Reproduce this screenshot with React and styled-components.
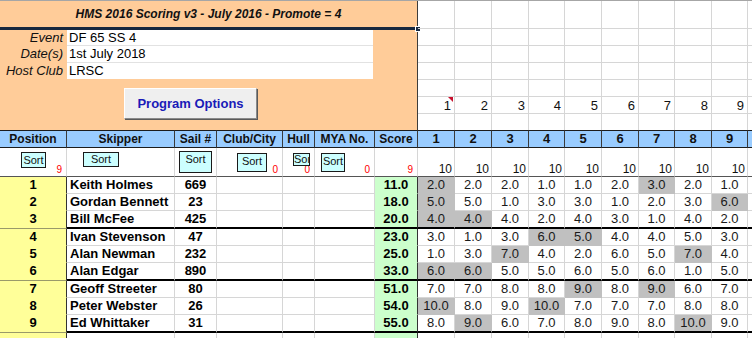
import React from 'react';
import styled, { createGlobalStyle, css } from 'styled-components';

const INFO_COLS = [67, 108, 42, 66, 32, 60, 43];
const RACE_COLS = [37, 37, 37, 36, 37, 37, 36, 37, 36, 37];
const px = (a) => a.map((w) => `${w}px`).join(' ');

const RESULTS = [
  { pos: 1, name: 'Keith Holmes', sail: '669', score: '11.0', races: ['2.0', '2.0', '2.0', '1.0', '1.0', '2.0', '3.0', '2.0', '1.0'], drop: [0, 6] },
  { pos: 2, name: 'Gordan Bennett', sail: '23', score: '18.0', races: ['5.0', '5.0', '1.0', '3.0', '3.0', '1.0', '2.0', '3.0', '6.0'], drop: [0, 8] },
  { pos: 3, name: 'Bill McFee', sail: '425', score: '20.0', races: ['4.0', '4.0', '4.0', '2.0', '4.0', '3.0', '1.0', '4.0', '2.0'], drop: [0, 1] },
  { pos: 4, name: 'Ivan Stevenson', sail: '47', score: '23.0', races: ['3.0', '1.0', '3.0', '6.0', '5.0', '4.0', '4.0', '5.0', '3.0'], drop: [3, 4] },
  { pos: 5, name: 'Alan Newman', sail: '232', score: '25.0', races: ['1.0', '3.0', '7.0', '4.0', '2.0', '6.0', '5.0', '7.0', '4.0'], drop: [2, 7] },
  { pos: 6, name: 'Alan Edgar', sail: '890', score: '33.0', races: ['6.0', '6.0', '5.0', '5.0', '6.0', '5.0', '6.0', '1.0', '5.0'], drop: [0, 1] },
  { pos: 7, name: 'Geoff Streeter', sail: '80', score: '51.0', races: ['7.0', '7.0', '8.0', '8.0', '9.0', '8.0', '9.0', '6.0', '7.0'], drop: [4, 6] },
  { pos: 8, name: 'Peter Webster', sail: '26', score: '54.0', races: ['10.0', '8.0', '9.0', '10.0', '7.0', '7.0', '7.0', '8.0', '8.0'], drop: [0, 3] },
  { pos: 9, name: 'Ed Whittaker', sail: '31', score: '55.0', races: ['8.0', '9.0', '6.0', '7.0', '8.0', '9.0', '8.0', '10.0', '9.0'], drop: [1, 7] },
];

const HEADERS = ['Position', 'Skipper', 'Sail #', 'Club/City', 'Hull', 'MYA No.', 'Score'];

const SORTS = [
  { btn: { ml: 21, mt: 4, w: 25, h: 16, label: 'Sort' }, count: '9' },
  { btn: { ml: 16, mt: 4, w: 36, h: 15, label: 'Sort' } },
  { btn: { ml: 4, mt: 3, w: 33, h: 22, label: 'Sort' } },
  { btn: { ml: 20, mt: 5, w: 30, h: 19, label: 'Sort' }, count: '0' },
  { btn: { ml: 10, mt: 5, w: 17, h: 13, label: 'Sor' }, count: '0' },
  { btn: { ml: 6, mt: 5, w: 24, h: 19, label: 'Sort' }, count: '0' },
  { count: '9' },
];

const GlobalStyle = createGlobalStyle`
  html, body { margin: 0; padding: 0; background: #ffffff; overflow: hidden; }
  body { font-family: "Liberation Sans", Arial, Helvetica, sans-serif; font-size: 13px; color: #000; }
  *, *::before, *::after { box-sizing: border-box; }
`;

const Sheet = styled.div`
  width: 752px;
  height: 338px;
  overflow: hidden;
  border-top: 1px solid #a6a6a6;
`;

const Top = styled.div`
  display: flex;
  height: 129px;
`;

const InfoPanel = styled.div`
  flex: 0 0 418px;
  background: #ffcc99;
  border-right: 1px solid #3c3c3c;
  display: flex;
  flex-direction: column;
`;

const TitleBar = styled.div`
  position: relative;
  height: 29px;
  border-bottom: 3px solid #17283f;
  text-align: center;
  font-size: 12px;
  font-weight: bold;
  font-style: italic;
  line-height: 27px;
  color: #111;
`;

const Handle = styled.span`
  position: absolute;
  right: -4px;
  bottom: -5px;
  width: 6px;
  height: 6px;
  background: #17283f;
  border: 1px solid #ffffff;
`;

const Fields = styled.div`
  display: grid;
  grid-template-columns: 67px 306px;
  grid-template-rows: 16px 17px 16px;
`;

const Label = styled.div`
  font-style: italic;
  text-align: right;
  padding-right: 4px;
  line-height: 16px;
  color: #111;
`;

const Value = styled.div`
  background: #ffffff;
  padding-left: 2px;
  line-height: 16px;
  border-bottom: ${(p) => (p.$last ? 'none' : '1px solid #e2e2e2')};
  color: #000;
`;

const ButtonRow = styled.div`
  display: flex;
  padding: 9px 0 0 124px;
`;

const ProgramButton = styled.button`
  width: 133px;
  height: 31px;
  margin: 0;
  padding: 0;
  background: #efefef;
  border: 1px solid;
  border-color: #ffffff #8a8a8a #8a8a8a #ffffff;
  box-shadow: 1px 1px 0 #5a5a5a;
  font-family: inherit;
  font-size: 13px;
  font-weight: bold;
  color: #1a1ab8;
  cursor: default;
`;

const MiniGrid = styled.div`
  flex: 0 0 auto;
  display: grid;
  grid-template-columns: ${px(RACE_COLS)};
  grid-template-rows: 28px 17px 17px 17px 17px 17px 16px;
`;

const GridCell = styled.div`
  position: relative;
  border-right: 1px solid #d6d6d6;
  border-bottom: ${(p) => (p.$open ? 'none' : '1px solid #d6d6d6')};
  text-align: right;
  padding-right: 3px;
  line-height: 17px;
  font-size: 13px;
  color: #111;
  ${(p) =>
    p.$comment &&
    css`
      &::after {
        content: '';
        position: absolute;
        top: 0;
        right: 1px;
        border-top: 5px solid #c8102e;
        border-left: 5px solid transparent;
      }
    `}
`;

const Table = styled.div`
  display: grid;
  grid-template-columns: ${px([...INFO_COLS, ...RACE_COLS])};
  width: ${[...INFO_COLS, ...RACE_COLS].reduce((a, b) => a + b, 0)}px;
`;

const HeadCell = styled.div`
  height: 18px;
  background: #99ccff;
  border-top: 1px solid #1c1c1c;
  border-bottom: 1px solid #1c1c1c;
  border-right: 1px solid #3a3a3a;
  text-align: center;
  font-size: ${(p) => (p.$race ? 13 : 12)}px;
  font-weight: bold;
  line-height: 16px;
  color: #111;
  white-space: nowrap;
  overflow: hidden;
`;

const SortCell = styled.div`
  height: 29px;
  display: grid;
  grid-template: 1fr / 1fr;
  border-right: 1px solid #d6d6d6;
  border-bottom: 1px solid #555;
  overflow: hidden;
  & > * { grid-area: 1 / 1; }
`;

const SortButton = styled.div`
  justify-self: start;
  align-self: start;
  margin: ${(p) => p.$mt}px 0 0 ${(p) => p.$ml}px;
  width: ${(p) => p.$w}px;
  height: ${(p) => p.$h}px;
  background: #ccffff;
  border: 1px solid #1a1a1a;
  font-size: 11px;
  line-height: ${(p) => Math.min(p.$h - 2, 15)}px;
  text-align: center;
  white-space: nowrap;
  overflow: hidden;
  color: #111;
  position: relative;
`;

const Count = styled.span`
  justify-self: end;
  align-self: end;
  padding: 0 4px 0 0;
  font-size: 10px;
  line-height: 12px;
  color: #ff0000;
`;

const Entries = styled.span`
  justify-self: end;
  align-self: end;
  padding-right: 2px;
  font-size: 12px;
  line-height: 14px;
  color: #111;
`;

const dataCell = css`
  height: ${(p) => (p.$thick ? 18 : 17)}px;
  line-height: 16px;
  white-space: nowrap;
  overflow: hidden;
  border-right: 1px solid #d6d6d6;
  border-bottom: ${(p) => (p.$thick ? '2px solid #000' : '1px solid #d6d6d6')};
`;

const PosCell = styled.div`
  ${dataCell}
  background: #ffff99;
  border-right-color: #333;
  border-bottom: 1px solid ${(p) => (p.$thick ? '#9a9a6a' : '#ffff99')};
  text-align: center;
  font-weight: bold;
`;

const NameCell = styled.div`
  ${dataCell}
  padding-left: 3px;
  font-weight: bold;
`;

const SailCell = styled.div`
  ${dataCell}
  text-align: center;
  font-weight: bold;
`;

const BlankCell = styled.div`
  ${dataCell}
`;

const ScoreCell = styled.div`
  ${dataCell}
  background: #ccffcc;
  border-right-color: #333;
  ${(p) => !p.$thick && css`border-bottom-color: #ccffcc;`}
  text-align: center;
  font-weight: bold;
`;

const RaceCell = styled.div`
  ${dataCell}
  text-align: center;
  color: #1a1a1a;
  ${(p) =>
    p.$drop &&
    css`
      background: #c0c0c0;
      border-right-color: #c0c0c0;
      ${!p.$thick && 'border-bottom-color: #c0c0c0;'}
    `}
`;

function InfoBlock() {
  return (
    <InfoPanel>
      <TitleBar>
        HMS 2016 Scoring v3 - July 2016 - Promote = 4
        <Handle />
      </TitleBar>
      <Fields>
        <Label>Event</Label>
        <Value>DF 65 SS 4</Value>
        <Label>Date(s)</Label>
        <Value>1st July 2018</Value>
        <Label>Host Club</Label>
        <Value $last>LRSC</Value>
      </Fields>
      <ButtonRow>
        <ProgramButton type="button">Program Options</ProgramButton>
      </ButtonRow>
    </InfoPanel>
  );
}

function RaceGrid() {
  const cells = [];
  for (let r = 0; r < 7; r++) {
    for (let c = 0; c < RACE_COLS.length; c++) {
      const label = r === 5 && c < 9 ? String(c + 1) : '';
      cells.push(
        <GridCell key={`${r}-${c}`} $open={r === 6} $comment={r === 5 && c === 0}>
          {label}
        </GridCell>
      );
    }
  }
  return <MiniGrid>{cells}</MiniGrid>;
}

export default function App() {
  const rows = [...RESULTS, null];
  return (
    <>
      <GlobalStyle />
      <Sheet>
        <Top>
          <InfoBlock />
          <RaceGrid />
        </Top>
        <Table>
          {HEADERS.map((h) => (
            <HeadCell key={h}>{h}</HeadCell>
          ))}
          {RACE_COLS.map((_, i) => (
            <HeadCell key={`h${i}`} $race>
              {i < 9 ? i + 1 : ''}
            </HeadCell>
          ))}

          {SORTS.map((s, i) => (
            <SortCell key={`s${i}`}>
              {s.count && <Count>{s.count}</Count>}
              {s.btn && (
                <SortButton $ml={s.btn.ml} $mt={s.btn.mt} $w={s.btn.w} $h={s.btn.h}>
                  {s.btn.label}
                </SortButton>
              )}
            </SortCell>
          ))}
          {RACE_COLS.map((_, i) => (
            <SortCell key={`sr${i}`}>
              {i < 9 && <Entries>10</Entries>}
            </SortCell>
          ))}

          {rows.map((r, idx) => {
            const thick = idx % 3 === 2 && idx < 9;
            if (!r) {
              return (
                <React.Fragment key="empty">
                  <PosCell />
                  <NameCell />
                  <SailCell />
                  <BlankCell />
                  <BlankCell />
                  <BlankCell />
                  <ScoreCell />
                  {RACE_COLS.map((_, i) => (
                    <RaceCell key={i} />
                  ))}
                </React.Fragment>
              );
            }
            return (
              <React.Fragment key={r.pos}>
                <PosCell $thick={thick}>{r.pos}</PosCell>
                <NameCell $thick={thick}>{r.name}</NameCell>
                <SailCell $thick={thick}>{r.sail}</SailCell>
                <BlankCell $thick={thick} />
                <BlankCell $thick={thick} />
                <BlankCell $thick={thick} />
                <ScoreCell $thick={thick}>{r.score}</ScoreCell>
                {r.races.map((v, i) => (
                  <RaceCell key={i} $thick={thick} $drop={r.drop.includes(i)}>
                    {v}
                  </RaceCell>
                ))}
                <RaceCell $thick={thick} />
              </React.Fragment>
            );
          })}
        </Table>
      </Sheet>
    </>
  );
}
